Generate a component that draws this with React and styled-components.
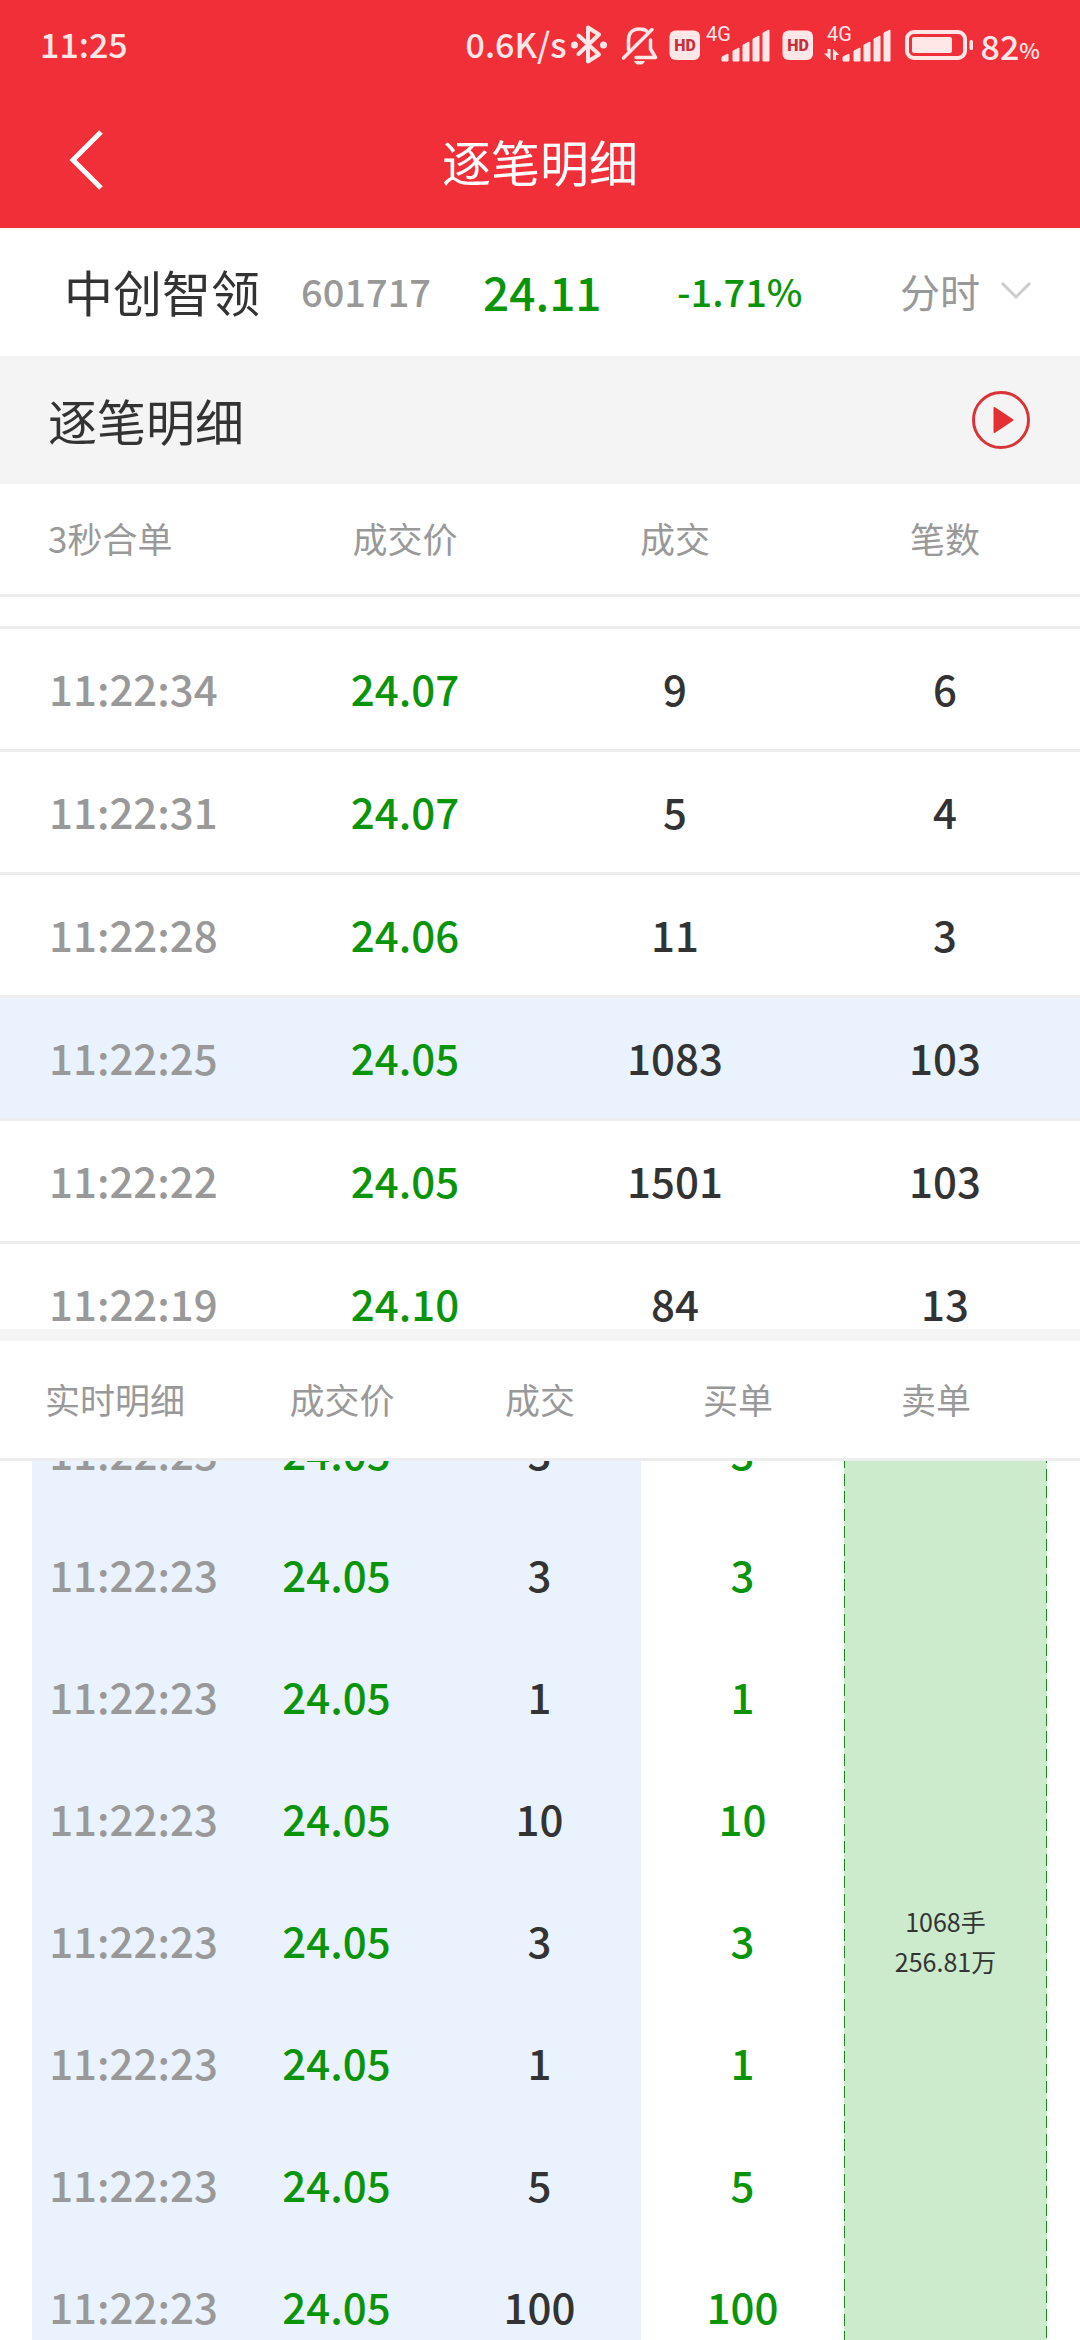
import React, { useLayoutEffect, useRef } from "react";
import styled, { createGlobalStyle, css } from "styled-components";

const color = {
  brand: "#f12f38",
  ink: "#333333",
  muted: "#999999",
  fall: "#099409",
  dash: "#1f861f",
  line: "#ededed",
  panel: "#f4f4f4",
  active: "#eaf3fd",
  sell: "#ccebcc",
  status: "#ffe7e8",
};

const GlobalStyle = createGlobalStyle`
  *, *::before, *::after { box-sizing: border-box; }
  body {
    margin: 0;
    background: #ffffff;
    color: ${color.ink};
    font-family: "Noto Sans CJK SC", "Noto Sans", sans-serif;
  }
  button, select { font: inherit; color: inherit; }
`;

const Screen = styled.div`
  display: flex;
  flex-direction: column;
  height: 100vh;
  overflow: hidden;
`;

const Header = styled.header`
  flex: none;
  background: ${color.brand};
`;

const StatusBar = styled.div`
  display: flex;
  align-items: center;
  justify-content: space-between;
  height: 92px;
  padding: 0 40px;
  color: ${color.status};
  font-size: 34px;
  font-weight: 500;
  line-height: 48px;
`;

const StatusText = styled.span`
  padding: 0 4px 4px 0;
`;

const StatusGroup = styled.div`
  display: flex;
  align-items: center;
`;

const Percent = styled.small`
  font-size: 22px;
  line-height: 32px;
  padding-top: 6px;
`;

const StatusIcon = styled.svg`
  display: block;
  flex: none;
  height: 48px;
  fill: none;
  font-family: Roboto, sans-serif;
  font-weight: 400;
`;

const NavBar = styled.div`
  display: grid;
  grid-template-columns: 120px 1fr 120px;
  align-items: center;
  height: 136px;
  color: #ffffff;
`;

const BackButton = styled.button`
  display: flex;
  justify-content: flex-end;
  align-items: center;
  height: 96px;
  padding: 0 16px 0 0;
  border: 0;
  background: none;
`;

const PageTitle = styled.h1`
  margin: 0;
  padding-top: 2px;
  text-align: center;
  font-size: 49px;
  font-weight: 400;
  line-height: 72px;
`;

const Quote = styled.section`
  flex: none;
  display: grid;
  grid-template-columns: 237fr 182fr 194fr 223fr 132fr;
  align-items: center;
  height: 128px;
  padding: 0 48px 2px 64px;
  line-height: 72px;
  white-space: nowrap;
`;

const StockName = styled.strong`
  font-size: 49px;
  font-weight: 400;
`;

const StockCode = styled.span`
  color: ${color.muted};
  font-size: 38px;
  font-weight: 500;
`;

const LastPrice = styled.span`
  color: ${color.fall};
  font-size: 46px;
  font-weight: 500;
`;

const Change = styled.span`
  color: ${color.fall};
  font-size: 38px;
  font-weight: 500;
`;

const ModePicker = styled.label`
  display: flex;
  align-items: center;
  justify-content: space-between;
  color: ${color.muted};
`;

const ModeSelect = styled.select`
  appearance: none;
  height: 72px;
  padding: 0;
  border: 0;
  background: none;
  font-size: 40px;
`;

const SectionBar = styled.section`
  flex: none;
  display: flex;
  align-items: center;
  justify-content: space-between;
  height: 128px;
  padding: 0 50px 0 48px;
  background: ${color.panel};
`;

const SectionTitle = styled.h2`
  margin: 0;
  font-size: 49px;
  font-weight: 400;
  line-height: 72px;
`;

const PlayButton = styled.button`
  display: flex;
  padding: 0;
  border: 0;
  background: none;
`;

const scrollArea = css`
  min-height: 0;
  overflow-y: auto;
  scrollbar-width: none;
`;

const MergedPanel = styled.section`
  ${scrollArea}
  flex: 845 1 0;
`;

const LivePanel = styled.section`
  flex: 999 1 0;
  min-height: 0;
  display: flex;
  flex-direction: column;
  border-top: 12px solid ${color.panel};
`;

const LiveScroller = styled.div`
  ${scrollArea}
  flex: 1;
  padding: 0 33px 0 32px;
`;

const Table = styled.table`
  width: 100%;
  table-layout: fixed;
  border-collapse: separate;
  border-spacing: 0;
`;

const StickyHead = styled.thead`
  position: sticky;
  top: 0;
  background: #ffffff;
`;

const LiveHead = styled.div`
  flex: none;
  padding: 0 45px;
  border-bottom: 3px solid ${color.line};
`;

const HeadCell = styled.th`
  height: ${(p) => p.$height}px;
  padding: 0 0 2px ${(p) => p.$indent || 0}px;
  border-bottom: ${(p) => (p.$ruled ? `3px solid ${color.line}` : "0")};
  color: ${color.muted};
  font-size: 35px;
  font-weight: 400;
  line-height: 48px;
  text-align: ${(p) => (p.$first ? "left" : "center")};
`;

const tones = {
  time: color.muted,
  price: color.fall,
  buy: color.fall,
  count: color.ink,
};

const Cell = styled.td`
  padding: 0 0 2px;
  color: ${(p) => tones[p.$tone]};
  font-size: 42px;
  font-weight: 500;
  line-height: 64px;
  text-align: center;
`;

const MergedRow = styled.tr`
  background: ${(p) => (p.$active ? color.active : "#ffffff")};
  & > td {
    height: ${(p) => (p.$partial ? 32 : 123)}px;
    border-bottom: 3px solid ${color.line};
  }
  & > td:first-child {
    padding-left: 49px;
    text-align: left;
  }
`;

const LiveRow = styled.tr`
  height: 122px;
  & > td:nth-child(-n + 3) {
    background: ${color.active};
  }
`;

const dash = `repeating-linear-gradient(
  ${color.dash} 0 12px, transparent 12px 17px,
  ${color.dash} 17px 29px, transparent 29px 35px)`;

const SellCell = styled.td`
  padding: 0;
  background: ${dash} 0 12px / 1px 100% repeat-y, ${dash} 100% 7px / 1px 100% repeat-y, ${color.sell};
  font-size: 25px;
  font-weight: 400;
  line-height: 40px;
  text-align: center;
`;

const SellLine = styled.div``;

const merged = [
  ["11:22:34", "24.07", "9", "6"],
  ["11:22:31", "24.07", "5", "4"],
  ["11:22:28", "24.06", "11", "3"],
  ["11:22:25", "24.05", "1083", "103"],
  ["11:22:22", "24.05", "1501", "103"],
  ["11:22:19", "24.10", "84", "13"],
];
const activeTime = "11:22:25";

const liveTime = "11:22:23";
const livePrice = "24.05";
const liveVolumes = ["3", "3", "1", "10", "3", "1", "5", "100"];

function BluetoothIcon() {
  return (
    <StatusIcon width="43" viewBox="4 0 43 48" aria-hidden="true">
      <g stroke={color.status} strokeWidth="4" strokeLinejoin="round" strokeLinecap="round">
        <path d="M11.500 13.500 L32 32.500 L21 39.500 V5.500 L32 12.500 L11.500 32" />
      </g>
      <circle cx="7.500" cy="23" r="3.500" fill={color.status} />
      <circle cx="36.500" cy="23" r="3.500" fill={color.status} />
    </StatusIcon>
  );
}

function MutedBellIcon() {
  return (
    <StatusIcon width="50" viewBox="0 0 50 48" aria-hidden="true">
      <g stroke={color.status} strokeWidth="3.500" strokeLinecap="round" strokeLinejoin="round">
        <path d="M9.500 36 L38 7.500" />
        <path d="M14.500 28 V18 C14.500 10.500 19 7 25.500 7 C28.500 7 31 7.700 32.500 9" />
        <path d="M36.500 18 V27 L41.500 35.500 H22" />
      </g>
      <path d="M20 39 H31 C30 42 28 42.500 25.500 42.500 C23 42.500 21 42 20 39 Z" fill={color.status} />
    </StatusIcon>
  );
}

function HdIcon() {
  return (
    <StatusIcon width="40" viewBox="0 0 40 48" role="img">
      <rect x="5.500" y="8.500" width="30.500" height="29.500" rx="6" fill={color.status} />
      <text x="21" y="29" textAnchor="middle" fontSize="16" fontWeight="900" fill="#c6323b">HD</text>
    </StatusIcon>
  );
}

const bars = [
  [0, 7, 6],
  [11, 13, 6],
  [21, 19, 6],
  [31, 25, 6],
  [41, 31, 6],
];

function SignalIcon({ data }) {
  const start = data ? 26 : 18;
  return (
    <StatusIcon width={data ? 80 : 73} viewBox={`0 0 ${data ? 80 : 73} 48`} role="img">
      <text x={data ? 10 : 2} y="19" fontSize="20" fill={color.status}>4G</text>
      {bars.map(([x, h, w]) => (
        <path
          key={x}
          fill={color.status}
          d={`M${start + x} 39 V${39 - h + 3} L${start + x + w} ${39 - h} V39 Z`}
          stroke={color.status}
          strokeWidth="1"
          strokeLinejoin="round"
        />
      ))}
      {data && (
        <g fill={color.status}>
          <path d="M10.500 27 H13.500 V38 L7 31.500 H10.500 Z" />
          <path d="M16 38 H19 V33 H22.500 L16 26.500 Z" />
        </g>
      )}
    </StatusIcon>
  );
}

function BatteryIcon() {
  return (
    <StatusIcon width="84" viewBox="0 0 84 48" aria-hidden="true">
      <rect x="10" y="10" width="58" height="26" rx="7" stroke={color.status} strokeWidth="4" />
      <rect x="15" y="15" width="40" height="16" rx="2" fill={color.status} />
      <rect x="72.500" y="18" width="3.500" height="10" rx="1.500" fill={color.status} />
    </StatusIcon>
  );
}

export default function App() {
  const scroller = useRef(null);

  useLayoutEffect(() => {
    scroller.current.scrollTop = 69;
  }, []);

  return (
    <>
      <GlobalStyle />
      <Screen>
        <Header>
          <StatusBar>
            <StatusText>11:25</StatusText>
            <StatusGroup>
              <StatusText>0.6K/s</StatusText>
              <BluetoothIcon />
              <MutedBellIcon />
              <HdIcon />
              <SignalIcon />
              <HdIcon />
              <SignalIcon data />
              <BatteryIcon />
              <span>82</span>
              <Percent>%</Percent>
            </StatusGroup>
          </StatusBar>
          <NavBar>
            <BackButton type="button" aria-label="返回">
              <svg width="36" height="62" viewBox="0 0 36 62" fill="none" stroke="#ffffff" strokeWidth="5">
                <path d="M33 3 L5 31 L33 59" />
              </svg>
            </BackButton>
            <PageTitle>逐笔明细</PageTitle>
          </NavBar>
        </Header>

        <Quote>
          <StockName>中创智领</StockName>
          <StockCode>601717</StockCode>
          <LastPrice>24.11</LastPrice>
          <Change>-1.71%</Change>
          <ModePicker>
            <ModeSelect aria-label="分时" defaultValue="分时">
              <option>分时</option>
            </ModeSelect>
            <svg width="32" height="20" viewBox="0 0 32 20" fill="none" stroke="#cccccc" strokeWidth="3" aria-hidden="true">
              <path d="M2 2 L16 16 L30 2" />
            </svg>
          </ModePicker>
        </Quote>

        <SectionBar>
          <SectionTitle>逐笔明细</SectionTitle>
          <PlayButton type="button" aria-label="播放">
            <svg width="58" height="58" viewBox="0 0 58 58">
              <circle cx="29" cy="29" r="27.500" fill="none" stroke="#d8343a" strokeWidth="3" />
              <path d="M22.500 17 L40.500 29 L22.500 41 Z" fill="#e43034" stroke="#e43034" strokeWidth="2" strokeLinejoin="round" />
            </svg>
          </PlayButton>
        </SectionBar>

        <MergedPanel>
          <Table>
            <StickyHead>
              <tr>
                <HeadCell $height={113} $ruled $first $indent={48}>3秒合单</HeadCell>
                <HeadCell $height={113} $ruled>成交价</HeadCell>
                <HeadCell $height={113} $ruled>成交</HeadCell>
                <HeadCell $height={113} $ruled>笔数</HeadCell>
              </tr>
            </StickyHead>
            <tbody>
              <MergedRow $partial>
                <td colSpan={4} />
              </MergedRow>
              {merged.map(([time, price, volume, count]) => (
                <MergedRow key={time} $active={time === activeTime}>
                  <Cell $tone="time">{time}</Cell>
                  <Cell $tone="price">{price}</Cell>
                  <Cell $tone="count">{volume}</Cell>
                  <Cell $tone="count">{count}</Cell>
                </MergedRow>
              ))}
            </tbody>
          </Table>
        </MergedPanel>

        <LivePanel>
          <LiveHead>
            <Table>
              <thead>
                <tr>
                  {["实时明细", "成交价", "成交", "买单", "卖单"].map((title, i) => (
                    <HeadCell key={title} $height={117} $first={i === 0}>{title}</HeadCell>
                  ))}
                </tr>
              </thead>
            </Table>
          </LiveHead>
          <LiveScroller ref={scroller}>
            <Table>
              <tbody>
                {liveVolumes.map((volume, i) => (
                  <LiveRow key={i}>
                    <Cell $tone="time">{liveTime}</Cell>
                    <Cell $tone="price">{livePrice}</Cell>
                    <Cell $tone="count">{volume}</Cell>
                    <Cell $tone="buy">{volume}</Cell>
                    {i === 0 && (
                      <SellCell rowSpan={liveVolumes.length + 1}>
                        <SellLine>1068手</SellLine>
                        <SellLine>256.81万</SellLine>
                      </SellCell>
                    )}
                  </LiveRow>
                ))}
                <LiveRow>
                  <td />
                  <td />
                  <td />
                  <td />
                </LiveRow>
              </tbody>
            </Table>
          </LiveScroller>
        </LivePanel>
      </Screen>
    </>
  );
}
